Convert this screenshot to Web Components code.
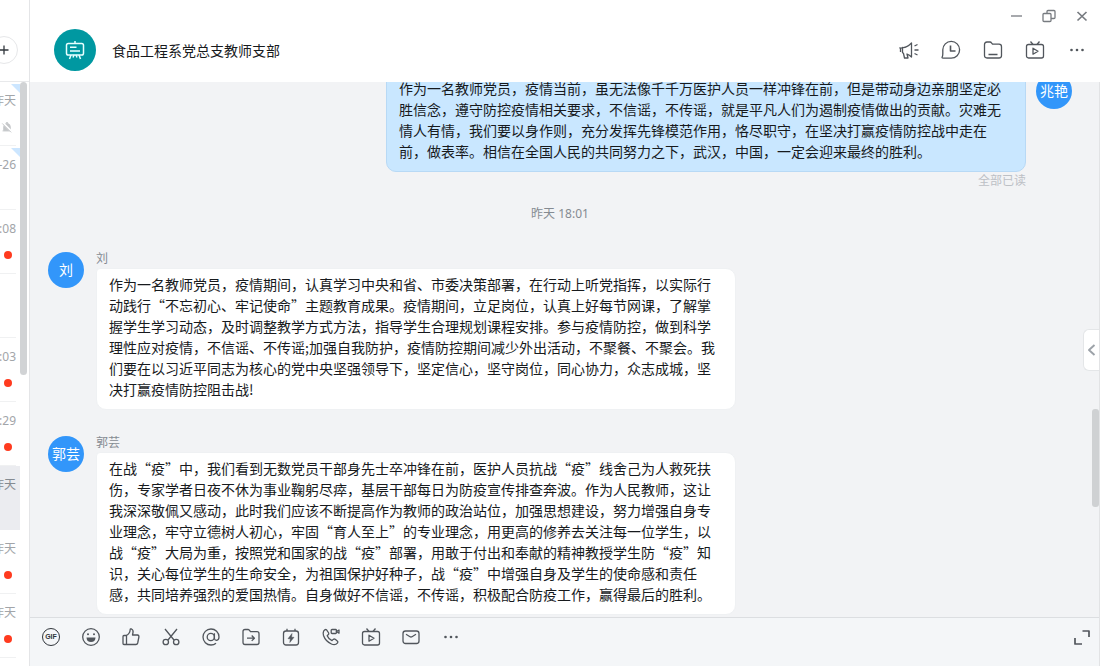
<!DOCTYPE html>
<html lang="zh-CN">
<head>
<meta charset="utf-8">
<meta name="viewport" content="width=device-width, initial-scale=1">
<title>食品工程系党总支教师支部</title>
<style>
html, body { height: 100%; margin: 0; }
body { font: 14px/21px "Noto Sans CJK SC", sans-serif; color: #171a1d; background: #fff; overflow: hidden; }
</style>
</head>
<body>
<chat-app></chat-app>
<script>
const define = (name, html, setup) => customElements.define(name, class extends HTMLElement {
  connectedCallback() {
    if (this.shadowRoot) return;
    const t = document.createElement('template');
    t.innerHTML = typeof html === 'function' ? html(this) : html;
    this.attachShadow({ mode: 'open' }).append(t.content.cloneNode(true));
    if (setup) setup(this);
  }
});

const ICONS = {
  plus: '<path d="M10 5.5v9M5.5 10h9"/>',
  min: '<path d="M5 10h11"/>',
  restore: '<rect x="4" y="7.500" width="8" height="8" rx="1"/><path d="M8 7.500V5.500q0-1 1-1h6q1 0 1 1v6q0 1-1 1h-3"/>',
  close: '<path d="M5.500 6l9 8.500M14.500 6l-9 8.500" stroke-width="1.700"/>',
  horn: '<path d="M3.500 7.500q4 .5 9-4.500v14q-2-2-4.500-3l1 4H5.500l-1-4.500-1-1zM.500 7.500l1 1v3.500M3.500 7.500l-2 1M15.500 6l3-1.500M15.500 10h4M15.500 13.500l3 1.500"/>',
  clock: '<path d="M2.500 18.200h7.700A8.400 8.400 0 1 0 1.800 9.800v4.200q0 1.800-.8 3.500 0 .7 1.500.7z"/><path d="M9.500 5.500V11h5" stroke-width="1.600"/>',
  folder: '<path d="M1.500 4.500q0-2.500 2.500-2.500h3q1 0 1.500.8l1 1.400h6.500q2.500 0 2.500 2.500V15.500q0 2.500-2.500 2.500H4q-2.500 0-2.500-2.500zM5.500 14.500h9"/>',
  tv: '<rect x="1.500" y="4.500" width="17" height="13.500" rx="2"/><path d="M5.500 1.500l2.500 3M14.500 1.500l-2.500 3M8 8.200v6l5-3z"/>',
  more: '<g fill="currentColor" stroke="none"><circle cx="4.500" cy="10" r="1.300"/><circle cx="10" cy="10" r="1.300"/><circle cx="15.500" cy="10" r="1.300"/></g>',
  smile: '<circle cx="10" cy="10" r="8.300"/><path d="M5.500 10.500h9q-.2 4.500-4.500 4.500t-4.500-4.500z" fill="currentColor" stroke="none"/><circle cx="7" cy="7.200" r="1" fill="currentColor" stroke="none"/><circle cx="13" cy="7.200" r="1" fill="currentColor" stroke="none"/>',
  like: '<path d="M2 9.500q0-1 1-1h2.500v9H3q-1 0-1-1zM5.500 8.500Q9 6.500 9.200 2.500q.2-.8 1.300-.5 2 1 1.500 3.500L11.500 8h5q1.700.3 1.400 2l-1.200 6q-.4 1.500-1.700 1.500H5.500"/>',
  cut: '<path d="M4 2l9 11M16 2L7 13"/><circle cx="4.800" cy="15" r="2.700"/><circle cx="15.200" cy="15" r="2.700"/>',
  at: '<circle cx="9.800" cy="10" r="3.600"/><path d="M13.400 6.300v5.200q.3 2 2.200 1.900 2.400-.6 2.400-3.500A8 8 0 1 0 10 18q3 0 5-1.700"/>',
  move: '<path d="M2 4.500q0-2 2-2h3q.8 0 1.300.6l1.200 1.600H16q2 0 2 2V15.500q0 2-2 2H4q-2 0-2-2zM6 11.200h7M10.700 8.500l2.700 2.700-2.700 2.700"/>',
  flash: '<rect x="2.500" y="4" width="15" height="14" rx="2.500"/><path d="M6 1.800V4M14 1.800V4"/><path d="M11 6.500l-4 5.200h2.300L8.800 15.500l4.200-5.200h-2.400z" fill="currentColor" stroke-width=".5"/>',
  call: '<path d="M2.600 4.200Q4.200 2 5.400 2.700L7.700 6q.5.900-.8 2l-.7.700Q7.500 12 11 13.600l1.200-1.200q1-.8 2-.1l2.100 1.800q1 .8.300 1.700-2.300 3-6.200 1.200Q4.500 14.200 2.500 8.500q-.8-2.500.1-4.300z"/><rect x="10.200" y="2.500" width="5.200" height="4" rx=".8"/><path d="M15.400 4.500L18 3v3.200z"/>',
  mail: '<rect x="2" y="4" width="16" height="12.500" rx="2.500"/><path d="M5 7.300L9 9.700q1 .6 2 0L15 7.300"/>',
  expand: '<path d="M10.500 4h6.500v6M3 11v6h7" stroke-width="1.700"/>',
  left: '<path d="M12.500 5L7 10l5.500 5" stroke-width="1.900"/>',
  muted: '<path d="M4.500 16V10q0-5 4.500-6V2.500h2V4q4.500 1 4.500 6v6zM2.500 16.500h15" fill="currentColor" stroke-width="1.500"/><path d="M2 2l16 16" stroke="#fff" stroke-width="3.500"/><path d="M2 4l15 15" stroke-width="1.500"/>',
  board: '<path d="M10 1v2.500M6 15l-1.500 4M14 15l1.500 4M9 15l-1 2.500M11 15l1 2.500"/><rect x="1.500" y="3.500" width="17" height="11.500" rx="1.800"/><path d="M5 7.300h6.500M5 11h10"/>'
};

define('app-icon', el => `<style>
:host{display:block;width:20px;height:20px}
svg{display:block;width:100%;height:100%;overflow:visible}
</style><svg viewBox="0 0 20 20" aria-hidden="true" fill="none" stroke="currentColor" stroke-width="${el.getAttribute('weight') || '1.3'}" stroke-linejoin="round">${ICONS[el.getAttribute('name')] || ''}</svg>`);

define('icon-button', el => `<style>
:host{display:block;color:#51565c}
button{display:flex;align-items:center;justify-content:center;width:20px;height:20px;margin:0;padding:0;border:0;background:none;color:inherit;font:inherit}
</style><button type="button" aria-label="${el.getAttribute('label')}"><slot><app-icon name="${el.getAttribute('name')}"></app-icon></slot></button>`);

define('gif-mark', `<style>
:host{box-sizing:border-box;display:flex;align-items:center;justify-content:center;width:18px;height:18px;border:1px solid #30353b;border-radius:50%;color:#30353b;font:bold 7px/8px "Liberation Sans",sans-serif}
</style><span>GIF</span>`);

define('user-avatar', `<style>
:host{box-sizing:border-box;display:flex;flex:none;align-items:center;justify-content:center;width:36px;height:36px;padding-bottom:2px;border-radius:50%;background:#3296fa;color:#fff;font-size:14px;line-height:20px}
</style><slot></slot>`);

define('chat-message', el => `<style>
:host{display:flex;gap:12px;align-items:flex-start}
:host([own]){flex-direction:row-reverse;gap:10px}
user-avatar{margin-top:2px}
:host([own]) user-avatar{margin-top:1px}
.body{display:flex;flex-direction:column;min-width:0;max-width:640px}
.name{margin-bottom:3px;font-size:12px;line-height:15px;color:#858b92}
.bubble{margin:0;padding:5px 12px 9px;border:1px solid #eff1f3;border-radius:4px 10px 10px 10px;background:#fff;text-spacing-trim:space-all;overflow-wrap:break-word}
:host([own]) .bubble{background:#c9e7ff;border-color:#b8d9f5;border-radius:10px 4px 10px 10px}
.read{align-self:flex-end;font-size:12px;line-height:15px;color:#bcc0c5}
</style><user-avatar>${el.getAttribute('avatar')}</user-avatar><div class="body">${el.hasAttribute('own') ? '' : `<span class="name">${el.getAttribute('avatar')}</span>`}<p class="bubble"><slot></slot></p>${el.hasAttribute('own') ? '<span class="read">全部已读</span>' : ''}</div>`);

define('session-item', el => `<style>
:host{position:relative;box-sizing:border-box;display:flex;flex-direction:column;align-items:flex-end;flex:none;height:64px;padding:11px 4px 0 0;color:#a2a5a9;font-size:12px;line-height:16px}
:host([active]){background:#ebecf0;color:#858b92}
:host::after{content:"";position:absolute;left:0;right:4px;bottom:0;height:1px;background:#f0f1f2}
:host([active])::after{display:none}
:host([pinned])::before{content:"";position:absolute;right:0;top:2px;width:9px;height:9px;background:#cce6ff;clip-path:polygon(0 0,100% 0,100% 100%)}
time{white-space:nowrap;height:16px}
.dot{width:8px;height:8px;margin:14px 4px 0 0;border-radius:50%;background:#ff3b1f}
app-icon{width:12px;height:12px;margin:12px 3px 0 0;color:#c5c7c9}
</style><time><slot></slot></time>${el.hasAttribute('unread') ? '<span class="dot"></span>' : ''}${el.hasAttribute('muted') ? '<app-icon name="muted"></app-icon>' : ''}`);

define('session-list', `<style>
:host{box-sizing:border-box;display:flex;flex-direction:column;flex:none;width:30px;border-right:1px solid #e4e5e7;overflow:hidden;background:#fff}
header{box-sizing:border-box;display:flex;flex:none;align-items:center;justify-content:flex-end;height:82px;padding:18px 11px 0 0;border-bottom:1px solid #e8e9eb}
.add{display:flex;flex:none;box-sizing:border-box;align-items:center;justify-content:center;width:28px;height:28px;border:1px solid #e6e7e9;border-radius:50%;color:#32373d}
icon-button{color:#32373d}
.scroll{display:flex;flex:1;min-height:0}
nav{display:flex;flex-direction:column;flex:none;width:20px;overflow:hidden;font-family:"Noto Sans","Noto Sans CJK SC",sans-serif}
.thumb{flex:none;width:7px;height:293px;border-radius:4px;background:#d1d3d5}
</style>
<header><div class="add"><icon-button name="plus" label="新建"></icon-button></div></header>
<div class="scroll"><nav aria-label="会话">
<session-item pinned muted>昨天</session-item>
<session-item pinned>-26</session-item>
<session-item unread>:08</session-item>
<session-item></session-item>
<session-item unread>:03</session-item>
<session-item unread>:29</session-item>
<session-item active>昨天</session-item>
<session-item unread>昨天</session-item>
<session-item unread>昨天</session-item>
</nav><div class="thumb"></div></div>`);

define('chat-header', `<style>
:host{box-sizing:border-box;display:flex;flex:none;justify-content:space-between;height:82px;padding:0 10px 0 24px;background:#fff}
.title{display:flex;align-items:center;gap:16px;padding-top:18px}
.logo{display:flex;align-items:center;justify-content:center;width:42px;height:42px;border-radius:50%;background:#0098a1;color:#e8ffff}
h1{margin:0;font-size:14px;line-height:20px;font-weight:400}
.side{display:flex;flex-direction:column;align-items:flex-end;gap:14px;padding-top:6px}
.win{display:flex;gap:13px}
.win icon-button{color:#777b80}
.tools{display:flex;gap:22px;padding-right:5px}
</style>
<div class="title"><div class="logo"><app-icon name="board" weight="1.5"></app-icon></div><h1>食品工程系党总支教师支部</h1></div>
<div class="side">
<div class="win"><icon-button name="min" label="最小化"></icon-button><icon-button name="restore" label="还原"></icon-button><icon-button name="close" label="关闭"></icon-button></div>
<div class="tools"><icon-button name="horn" label="群公告"></icon-button><icon-button name="clock" label="聊天记录"></icon-button><icon-button name="folder" label="文件"></icon-button><icon-button name="tv" label="直播"></icon-button><icon-button name="more" label="更多"></icon-button></div>
</div>`);

define('chat-toolbar', `<style>
:host{box-sizing:border-box;display:flex;flex:none;justify-content:space-between;height:49px;padding:9px 7px 0 11px;border-top:1px solid #dcdee1;background:#f4f6f8}
div{display:flex;gap:20px}
</style>
<div role="toolbar" aria-label="消息工具">
<icon-button label="GIF"><gif-mark></gif-mark></icon-button>
<icon-button name="smile" label="表情"></icon-button><icon-button name="like" label="赞"></icon-button><icon-button name="cut" label="截图"></icon-button><icon-button name="at" label="提及"></icon-button><icon-button name="move" label="发送文件"></icon-button><icon-button name="flash" label="快捷"></icon-button><icon-button name="call" label="通话"></icon-button><icon-button name="tv" label="直播"></icon-button><icon-button name="mail" label="邮件"></icon-button><icon-button name="more" label="更多"></icon-button>
</div>
<icon-button name="expand" label="展开"></icon-button>`);

define('chat-history', `<style>
:host{position:relative;display:flex;flex:1;flex-direction:column;justify-content:flex-end;min-height:0;padding:0 27px 2px 18px;overflow:hidden;background:#f2f3f5}
chat-message,time{flex:none}
chat-message + chat-message{margin-top:24px}
time{margin:19px 0 28px;text-align:center;font-family:"Noto Sans","Noto Sans CJK SC",sans-serif;font-size:12px;line-height:16px;color:#858b92}
.thumb{position:absolute;right:0;bottom:110px;width:7px;height:98px;border-radius:3px;background:#cfd1d3}
.handle{position:absolute;right:0;top:247px;display:flex;align-items:center;justify-content:center;box-sizing:border-box;width:16px;height:42px;border:1px solid #e4e6e8;border-right:0;border-radius:6px 0 0 6px;background:#fff}
.handle icon-button{color:#9ca2a8}
</style>
<chat-message own avatar="兆艳">作为一名教师党员，疫情当前，虽无法像千千万医护人员一样冲锋在前，但是带动身边亲朋坚定必胜信念，遵守防控疫情相关要求，不信谣，不传谣，就是平凡人们为遏制疫情做出的贡献。灾难无情人有情，我们要以身作则，充分发挥先锋模范作用，恪尽职守，在坚决打赢疫情防控战中走在前，做表率。相信在全国人民的共同努力之下，武汉，中国，一定会迎来最终的胜利。</chat-message>
<time>昨天 18:01</time>
<chat-message avatar="刘">作为一名教师党员，疫情期间，认真学习中央和省、市委决策部署，在行动上听党指挥，以实际行动践行“不忘初心、牢记使命”主题教育成果。疫情期间，立足岗位，认真上好每节网课，了解掌握学生学习动态，及时调整教学方式方法，指导学生合理规划课程安排。参与疫情防控，做到科学理性应对疫情，不信谣、不传谣;加强自我防护，疫情防控期间减少外出活动，不聚餐、不聚会。我们要在以习近平同志为核心的党中央坚强领导下，坚定信心，坚守岗位，同心协力，众志成城，坚决打赢疫情防控阻击战!</chat-message>
<chat-message avatar="郭芸">在战“疫”中，我们看到无数党员干部身先士卒冲锋在前，医护人员抗战“疫”线舍己为人救死扶伤，专家学者日夜不休为事业鞠躬尽瘁，基层干部每日为防疫宣传排查奔波。作为人民教师，这让我深深敬佩又感动，此时我们应该不断提高作为教师的政治站位，加强思想建设，努力增强自身专业理念，牢守立德树人初心，牢固“育人至上”的专业理念，用更高的修养去关注每一位学生，以战“疫”大局为重，按照党和国家的战“疫”部署，用敢于付出和奉献的精神教授学生防“疫”知识，关心每位学生的生命安全，为祖国保护好种子，战“疫”中增强自身及学生的使命感和责任感，共同培养强烈的爱国热情。自身做好不信谣，不传谣，积极配合防疫工作，赢得最后的胜利。</chat-message>
<div class="thumb"></div>
<div class="handle"><icon-button name="left" label="展开侧栏"></icon-button></div>`);

define('chat-app', `<style>
:host{display:flex;height:100vh}
main{display:flex;flex:1;flex-direction:column;min-width:0}
.panel{display:flex;flex:1;flex-direction:column;min-height:0;margin-right:2px;border-right:1px solid #e2e3e5}
</style>
<session-list></session-list>
<main><chat-header></chat-header><div class="panel"><chat-history></chat-history><chat-toolbar></chat-toolbar></div></main>`);
</script>
</body>
</html>
